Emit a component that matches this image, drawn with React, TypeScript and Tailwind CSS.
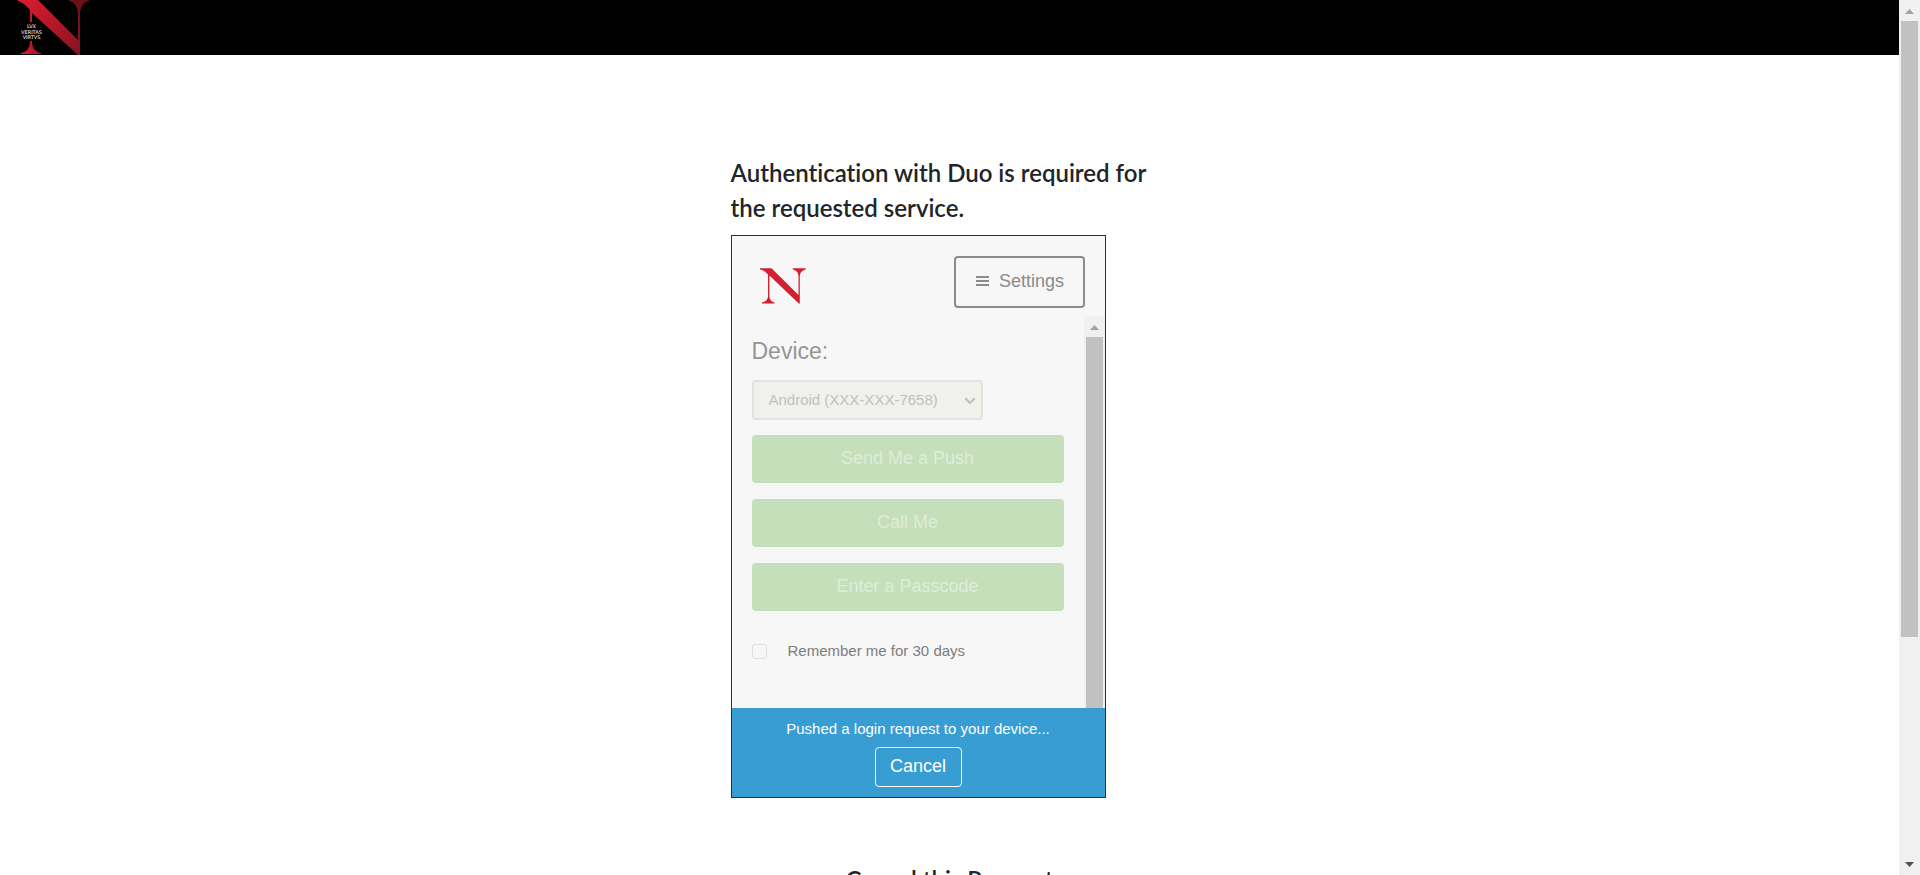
import React from "react";

function HeaderLogo() {
  return (
    <svg viewBox="0 0 90 55" className="block h-[55px] w-[90px]" role="img" aria-label="Lux Veritas Virtus">
      <defs>
        <linearGradient id="band" x1="18" y1="0" x2="80" y2="55" gradientUnits="userSpaceOnUse">
          <stop offset="0" stopColor="#dc1b30" />
          <stop offset="0.5" stopColor="#b51828" />
          <stop offset="1" stopColor="#851320" />
        </linearGradient>
        <linearGradient id="stem" x1="0" y1="0" x2="0" y2="45" gradientUnits="userSpaceOnUse">
          <stop offset="0" stopColor="#6a0e18" />
          <stop offset="1" stopColor="#851320" />
        </linearGradient>
        <linearGradient id="foot" x1="21" y1="0" x2="41" y2="0" gradientUnits="userSpaceOnUse">
          <stop offset="0" stopColor="#d61b2f" />
          <stop offset="1" stopColor="#a81625" />
        </linearGradient>
      </defs>
      <path d="M69 0H89V1C84 2 81 5 80 13V45L78 43V13C77 5 74 2 69 1Z" fill="url(#stem)" />
      <path d="M18 0H38L80 42V55H78L32 13V22H30V10C26 5 22 2 18 1Z" fill="url(#band)" />
      <path d="M30 41H32C32 48 35 52 41 53V54H21V53C27 52 30 48 30 41Z" fill="url(#foot)" />
      <g fill="#fff" fontFamily="'DejaVu Sans', sans-serif" fontSize="5" textAnchor="middle">
        <text x="31.500" y="28">LVX</text>
        <text x="31.500" y="34">VERITAS</text>
        <text x="31.500" y="39">VIRTVS</text>
      </g>
    </svg>
  );
}

function PanelLogo() {
  return (
    <svg viewBox="0 0 46 36" className="block h-9 w-[46px]" role="img" aria-label="N">
      <path
        d="M0 0.300H11.500L38.500 27V8C38.300 4.500 36.500 2.600 32.800 1.600V0.300H45.600V1.600C42 2.600 40 4.500 39.800 8V35.500H38.800L9.400 7.500V28.500C9.800 32 11.400 33.600 14.600 34.400V35.500H2V34.400C5.500 33.600 7.700 32 8 28.500V6.500C5.500 3.500 3 2 0 1.500Z"
        fill="#d41e31"
      />
    </svg>
  );
}

function ArrowUp() {
  return (
    <svg viewBox="0 0 9 5" className="h-[5px] w-[9px]" aria-hidden="true">
      <path d="M4.500 0L9 5H0Z" fill="#a3a3a3" />
    </svg>
  );
}

function ArrowDown() {
  return (
    <svg viewBox="0 0 9 5" className="h-[5px] w-[9px]" aria-hidden="true">
      <path d="M0 0H9L4.500 5Z" fill="#505050" />
    </svg>
  );
}

const actions = ["Send Me a Push", "Call Me", "Enter a Passcode"];

function DuoPanel() {
  return (
    <section className="flex w-[375px] flex-col border border-[#17344a] bg-[#f7f7f7] font-['Liberation_Sans',Arial,sans-serif]">
      <div className="flex items-start justify-between pt-5 pr-5 pb-2 pl-7">
        <div className="pt-3">
          <PanelLogo />
        </div>
        <button
          type="button"
          className="flex h-[52px] w-[131px] items-center justify-center gap-2.5 rounded border-2 border-[#8b8b8b] pb-0.5 pl-0.5 text-lg text-[#8b8b8b]"
        >
          <svg viewBox="0 0 13 10" className="h-2.5 w-[13px]" aria-hidden="true">
            <path d="M0 0H13V2H0ZM0 4H13V6H0ZM0 8H13V10H0Z" fill="#8b8b8b" />
          </svg>
          Settings
        </button>
      </div>

      <div className="flex h-[392px]">
        <form className="min-w-0 flex-1 px-5 pt-[21px]" onSubmit={(e) => e.preventDefault()}>
          <label htmlFor="device" className="block text-[23px] leading-7 text-[#959595]">
            Device:
          </label>
          <div className="relative mt-[15px] w-[231px]">
            <select
              id="device"
              className="block h-10 w-full appearance-none rounded border-2 border-[#e2e2e1] bg-[#f0f1ec] pl-[15px] text-[15px] text-[#c0c0bf]"
            >
              <option>Android (XXX-XXX-7658)</option>
            </select>
            <svg viewBox="0 0 12 8" className="pointer-events-none absolute top-[17px] right-[7px] h-2 w-3" aria-hidden="true">
              <path d="M1.200 1.200L6 6L10.800 1.200" fill="none" stroke="#c0c0bf" strokeWidth="2.200" />
            </svg>
          </div>
          <div className="mt-[15px] flex flex-col gap-4">
            {actions.map((label) => (
              <button
                key={label}
                type="button"
                className="h-12 w-full rounded bg-[#c5dfba] pb-0.5 text-lg text-[#deedd8]"
              >
                {label}
              </button>
            ))}
          </div>
          <label className="mt-[30px] flex items-center gap-[21px] text-[15px] leading-5 text-[#7d7d7d]">
            <input
              type="checkbox"
              className="size-[15px] appearance-none rounded-[3px] border border-[#dedede] bg-[#f7f7f7]"
            />
            Remember me for 30 days
          </label>
        </form>
        <div className="flex w-[21px] flex-col bg-[#f0f0f0]" aria-hidden="true">
          <div className="flex h-[21px] shrink-0 items-center justify-center pt-0.5">
            <ArrowUp />
          </div>
          <div className="mr-0.5 ml-0.5 flex-1 bg-[#c1c1c1]" />
        </div>
      </div>

      <div className="flex h-[89px] flex-col items-center bg-[#379dd3] pt-[11px] text-white">
        <p className="text-[15px] leading-5">Pushed a login request to your device...</p>
        <button type="button" className="mt-2 h-10 w-[87px] rounded border border-white pb-0.5 text-lg">
          Cancel
        </button>
      </div>
    </section>
  );
}

export default function App() {
  return (
    <div className="flex h-screen overflow-hidden bg-white font-[Lato,sans-serif] text-[#212529] [font-variant-ligatures:none]">
      <div className="min-w-0 flex-1">
        <header className="bg-black">
          <HeaderLogo />
        </header>
        <main className="mx-auto w-[438px] pt-[100px]">
          <h1 className="mb-2.5 text-2xl leading-[35px] font-semibold">
            Authentication with Duo is required for the requested service.
          </h1>
          <DuoPanel />
          <p className="mt-16 text-center text-2xl leading-[35px] font-semibold">
            <a href="#cancel">Cancel this Request</a>
          </p>
        </main>
      </div>
      <div className="flex w-[21px] shrink-0 flex-col items-center bg-[#f0f0f0]" aria-hidden="true">
        <div className="flex h-[21px] shrink-0 items-center pt-0.5">
          <ArrowUp />
        </div>
        <div className="flex w-[17px] flex-1 flex-col">
          <div className="h-[74%] bg-[#c1c1c1]" />
        </div>
        <div className="flex h-[21px] shrink-0 items-center">
          <ArrowDown />
        </div>
      </div>
    </div>
  );
}
